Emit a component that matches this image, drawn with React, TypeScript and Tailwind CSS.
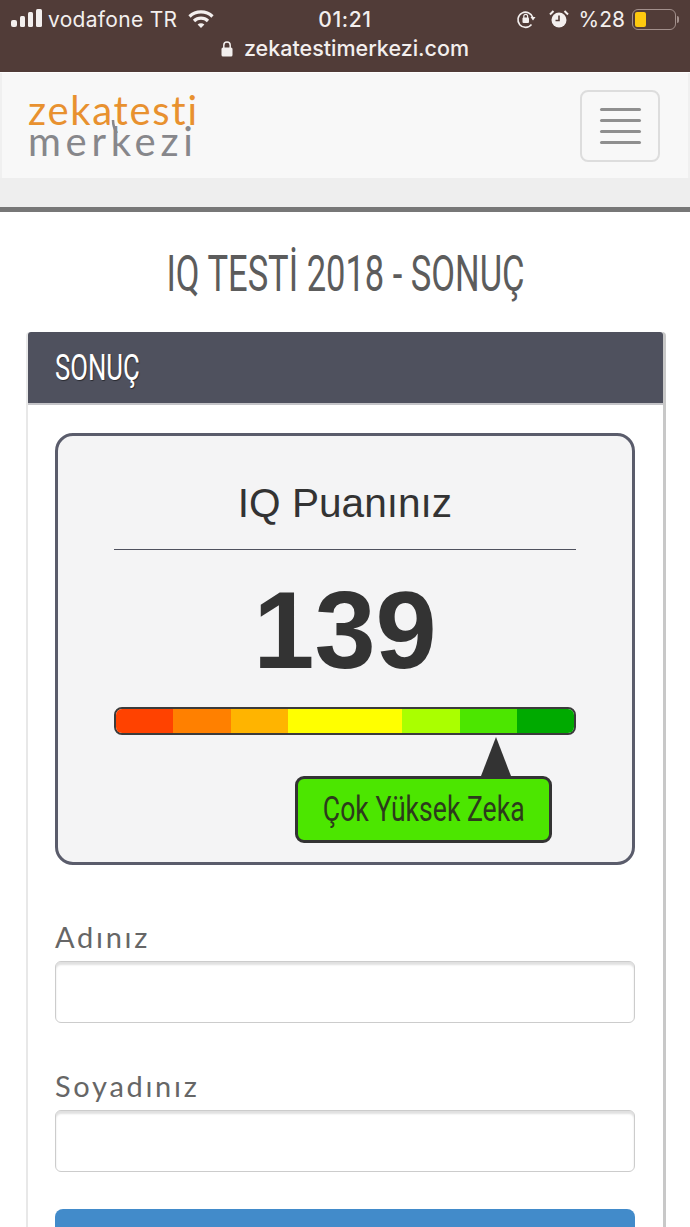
const oswald = { fontFamily: "Roboto, 'Liberation Sans', sans-serif" };

function StatusBar() {
  return (
    <div className="h-[72px] bg-[#513c38] text-[#f3efee] font-['Inter',sans-serif]">
      <div className="grid grid-cols-[1fr_auto_1fr] items-center h-[38px] pl-[11px] pr-[11px]">
        <div className="flex items-center">
          <svg width="32" height="20" viewBox="0 0 32 20" fill="#f3efee">
            <rect x="0" y="11" width="6" height="7" rx="2" />
            <rect x="9" y="7" width="5" height="11" rx="1.5" />
            <rect x="17" y="3" width="5" height="15" rx="1.5" />
            <rect x="25" y="0" width="6" height="18" rx="1.5" />
          </svg>
          <span className="ml-[5px] text-[21px] leading-none font-normal tracking-[0.3px]">vodafone TR</span>
          <svg className="ml-[11px]" width="26" height="20" viewBox="0 0 26 20" fill="none" stroke="#f3efee" strokeWidth="3.2">
            <path d="M1.5 7.5C7.8 1.4 18.2 1.4 24.5 7.5" />
            <path d="M6 12C10 8.2 16 8.2 20 12" />
            <path d="M13 19L9.6 15.4C11.6 13.7 14.4 13.7 16.4 15.4Z" fill="#f3efee" stroke="none" />
          </svg>
        </div>
        <span className="text-[21px] leading-none font-medium tracking-[0.6px]">01:21</span>
        <div className="flex items-center justify-end">
          <svg width="20" height="20" viewBox="0 0 20 20" fill="none" stroke="#f3efee" strokeWidth="1.6">
            <path d="M16.8 8.5A7.6 7.6 0 1 0 15.5 15.5" />
            <path d="M14.5 8L19.5 8L17 11.5Z" fill="#f3efee" stroke="none" />
            <rect x="6.5" y="8.5" width="6.5" height="5.5" rx="1" fill="#f3efee" stroke="none" />
            <path d="M7.8 9V7.2A1.9 1.9 0 0 1 11.6 7.2V9" strokeWidth="1.2" />
          </svg>
          <svg className="ml-[13px]" width="20" height="20" viewBox="0 0 20 20">
            <circle cx="10" cy="11" r="7.5" fill="#f3efee" />
            <path d="M10 6.5V11.5H6.5" fill="none" stroke="#513c38" strokeWidth="1.6" />
            <path d="M1 5.5L4.5 2M19 5.5L15.5 2" stroke="#f3efee" strokeWidth="2" />
          </svg>
          <span className="ml-[10px] text-[21px] leading-none">%28</span>
          <div className="ml-[7px] flex items-center">
            <div className="w-[44px] h-[21px] rounded-[6px] border-[1.5px] border-[#a2908c] p-[2px]">
              <div className="w-[11px] h-full rounded-[2px] bg-[#fdc90f]" />
            </div>
            <div className="ml-[1px] w-[2px] h-[7px] rounded-r-sm bg-[#a2908c]" />
          </div>
        </div>
      </div>
      <div className="flex items-center justify-center h-[22px]">
        <svg width="12" height="16" viewBox="0 0 12 16" fill="#f3efee">
          <rect x="0.5" y="6.5" width="11" height="9" rx="1.5" />
          <path d="M2.8 7V4.3a3.2 3.2 0 0 1 6.4 0V7" fill="none" stroke="#f3efee" strokeWidth="1.5" />
        </svg>
        <span className="ml-[11px] text-[21.5px] leading-none font-medium">zekatestimerkezi.com</span>
      </div>
    </div>
  );
}

function Logo() {
  return (
    <div className="relative font-['Lato',sans-serif]">
      <div className="text-[#e8912f] text-[40px] leading-[31px] tracking-[1.7px]">zekatesti</div>
      <div className="text-[#87878b] text-[40px] leading-[31px] tracking-[4.7px]">merkezi</div>
      {/* tail of the a, runs down into the second line */}
      <svg className="absolute left-[83px] top-[25px]" width="8" height="14" viewBox="0 0 8 14" fill="none" stroke="#87878b" strokeWidth="2.5">
        <path d="M2 0C2 5 3 9 6 13" />
      </svg>
    </div>
  );
}

function Navbar() {
  return (
    <div>
      <div className="h-[105px] mt-px bg-[#f8f8f8] border-l-2 border-r-2 border-[#f0f0f0] flex items-center justify-between pl-[26px] pr-[28px]">
        <Logo />
        <div className="w-[80px] h-[72px] rounded-[8px] border-2 border-[#dddddd] flex flex-col items-center justify-center gap-[8px]">
          <div className="w-[41px] h-[3px] rounded-sm bg-[#8f8f8f]" />
          <div className="w-[41px] h-[3px] rounded-sm bg-[#8f8f8f]" />
          <div className="w-[41px] h-[3px] rounded-sm bg-[#8f8f8f]" />
          <div className="w-[41px] h-[3px] rounded-sm bg-[#8f8f8f]" />
        </div>
      </div>
      <div className="h-[29px] bg-[#eeeeee]" />
      <div className="h-[5px] bg-[#777777]" />
    </div>
  );
}

function Gauge() {
  const segments = [
    { color: "bg-[#ff4200]", grow: "flex-1" },
    { color: "bg-[#ff8000]", grow: "flex-1" },
    { color: "bg-[#ffb400]", grow: "flex-1" },
    { color: "bg-[#ffff00]", grow: "flex-[2]" },
    { color: "bg-[#aaff00]", grow: "flex-1" },
    { color: "bg-[#4ce600]", grow: "flex-1" },
    { color: "bg-[#00aa00]", grow: "flex-1" },
  ];
  return (
    <div className="flex h-[28px] overflow-hidden rounded-[8px] border-2 border-[#3b3b3b]">
      {segments.map((s, i) => (
        <div key={i} className={`${s.grow} ${s.color}`} />
      ))}
    </div>
  );
}

function ScoreBox() {
  return (
    <div className="h-[432px] rounded-[18px] border-[3px] border-[#5a5c6b] bg-[#f4f4f5] px-[56px] font-['Liberation_Sans',sans-serif]">
      <div className="pt-[39px] h-[114px] border-b border-[#4f515e] text-center text-[40.6px] leading-[56px] text-[#333333]">
        IQ Puanınız
      </div>
      <div className="h-[157px] text-center text-[110px] leading-[159px] font-bold text-[#333333]">139</div>
      <Gauge />
      <div className="flex flex-col items-start">
        <div className="ml-[367px] mt-[2px] w-0 h-0 border-x-[15px] border-x-transparent border-b-[39px] border-b-[#333333]" />
        <div className="ml-[181px] w-[257px] h-[67px] rounded-[9px] border-[3px] border-[#333333] bg-[#4ce600] flex items-center justify-center">
          <span style={oswald} className="inline-block scale-x-[0.76] whitespace-nowrap text-[35px] leading-none text-[#2c3b1c]">
            Çok Yüksek Zeka
          </span>
        </div>
      </div>
    </div>
  );
}

function Field({ label, className }: { label: string; className: string }) {
  return (
    <div className={className}>
      <div className="h-[45px] font-['Lato',sans-serif] text-[29px] leading-[42px] tracking-[2.7px] text-[#666666]">{label}</div>
      <div className="h-[62px] rounded-[6px] border-[1.5px] border-[#cccccc] bg-white shadow-[inset_0_3px_2px_rgba(0,0,0,0.12)]" />
    </div>
  );
}

export default function App() {
  return (
    <div className="h-[1227px] w-[690px] overflow-hidden bg-white">
      <StatusBar />
      <Navbar />
      <h1 style={oswald} className="mt-[36px] h-[48px] text-center text-[50px] leading-[52px] font-normal text-[#5c5c5c]">
        <span className="inline-block scale-x-[0.69] whitespace-nowrap">IQ TESTİ 2018 - SONUÇ</span>
      </h1>
      <div className="mt-[36px] ml-[26px] w-[640px] rounded-t-[4px] border-l-2 border-r-[3px] border-l-[#e8e8e8] border-r-[#c8c8c8]">
        <div className="h-[73px] bg-[#4f515e] border-b-2 border-[#c4c4c8] rounded-t-[3px] flex items-center pl-[27px]">
          <span style={oswald} className="inline-block origin-left scale-x-[0.715] whitespace-nowrap text-[36px] leading-none text-white [text-shadow:1px_1px_1px_rgba(0,0,0,0.5)]">
            SONUÇ
          </span>
        </div>
        <div className="pl-[27px] pr-[28px] pt-[28px] pb-[40px]">
          <ScoreBox />
          <Field label="Adınız" className="mt-[51px]" />
          <Field label="Soyadınız" className="mt-[42px]" />
          <div className="mt-[37px] h-[60px] rounded-[8px] bg-[#428bca]" />
        </div>
      </div>
    </div>
  );
}
